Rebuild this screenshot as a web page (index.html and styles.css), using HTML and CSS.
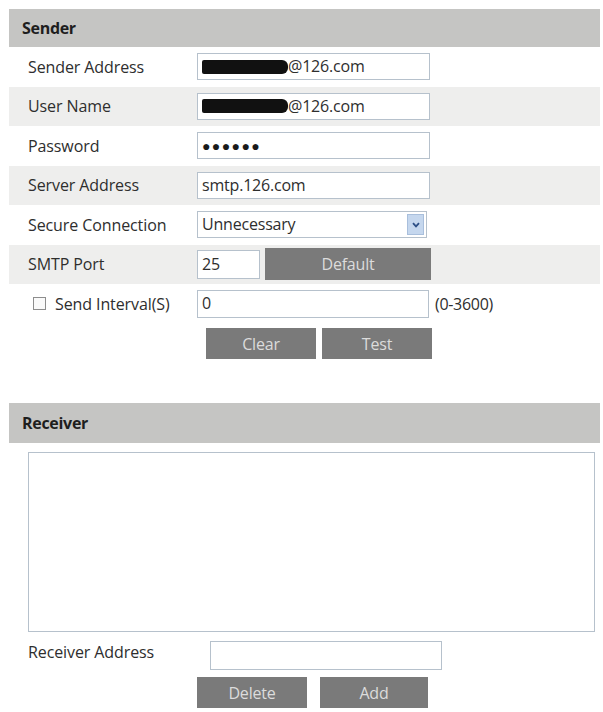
FILE: index.html
```html
<!DOCTYPE html>
<html lang="en">
<head>
    <meta charset="UTF-8">
    <meta name="viewport" content="width=device-width, initial-scale=1.0">
    <title>Email Settings</title>
    <link rel="stylesheet" href="styles.css">
</head>
<body>

<div class="page">

    <!-- Sender settings -->
    <div class="section-title">Sender</div>

    <div class="row">
        <label class="row-label">Sender Address</label>
        <div class="field"><span class="mask"></span>@126.com</div>
    </div>
    <div class="row alt">
        <label class="row-label">User Name</label>
        <div class="field"><span class="mask"></span>@126.com</div>
    </div>
    <div class="row">
        <label class="row-label">Password</label>
        <div class="field dots">&#9679;&#9679;&#9679;&#9679;&#9679;&#9679;</div>
    </div>
    <div class="row alt">
        <label class="row-label">Server Address</label>
        <div class="field">smtp.126.com</div>
    </div>
    <div class="row">
        <label class="row-label">Secure Connection</label>
        <div class="field select">
            <span>Unnecessary</span>
            <span class="select-arrow">
                <svg width="8" height="6" viewBox="0 0 8 6"><path d="M1 1.2 L4 4.4 L7 1.2" fill="none" stroke="#2d4f86" stroke-width="1.8"/></svg>
            </span>
        </div>
    </div>
    <div class="row alt">
        <label class="row-label">SMTP Port</label>
        <div class="field port">25</div>
        <button class="btn btn-default">Default</button>
    </div>
    <div class="row">
        <label class="row-label check-label"><span class="checkbox"></span>Send Interval(S)</label>
        <div class="field interval">0</div>
        <span class="hint">(0-3600)</span>
    </div>

    <div class="btn-row sender-btns">
        <button class="btn">Clear</button>
        <button class="btn">Test</button>
    </div>

    <!-- Receiver list -->
    <div class="section-title receiver-title">Receiver</div>

    <div class="receiver-list"></div>

    <div class="receiver-row">
        <label class="row-label receiver-label">Receiver Address</label>
        <div class="field receiver-field"></div>
    </div>

    <div class="btn-row receiver-btns">
        <button class="btn">Delete</button>
        <button class="btn btn-add">Add</button>
    </div>

</div>

</body>
</html>
```

FILE: styles.css
```css
body {
    font-family: "Open Sans", "Noto Sans", Arial, sans-serif;
    font-size: 16px;
    color: #2e2e2e;
    background-color: #fff;
    margin: 0;
    padding: 0;
}
.page {
    width: 591px;
    margin-left: 9px;
    padding-top: 9px;
}
.section-title {
    height: 38px;
    line-height: 38px;
    padding-left: 13px;
    background-color: #c5c5c3;
    font-weight: bold;
    color: #1e1e1e;
    letter-spacing: -0.3px;
}
.row {
    display: flex;
    align-items: center;
    height: 39.5px;
    padding-left: 19px;
}
.row.alt {
    background-color: #eeeeed;
}
.row-label {
    width: 169px;
    flex-shrink: 0;
    letter-spacing: -0.1px;
}
.field {
    box-sizing: border-box;
    width: 233px;
    height: 27px;
    line-height: 25px;
    padding-left: 4px;
    background-color: #fff;
    border: 1px solid #b6c1cc;
    display: flex;
    align-items: center;
    letter-spacing: -0.2px;
}
.mask {
    display: inline-block;
    width: 86px;
    height: 14px;
    background-color: #111;
    border-radius: 2px 6px 6px 2px;
}
.dots {
    font-size: 14px;
    letter-spacing: 1.4px;
    color: #1a1a1a;
}
.select {
    width: 230px;
    justify-content: space-between;
    padding-right: 2px;
}
.select-arrow {
    width: 17px;
    height: 21px;
    background-color: #c5d7ee;
    border: 1px solid #a9bfdc;
    box-sizing: border-box;
    display: flex;
    align-items: center;
    justify-content: center;
}
.port {
    width: 63px;
    height: 29px;
}
.btn {
    background-color: #7a7a7a;
    color: #dcdcdc;
    font-family: "Open Sans", "Noto Sans", Arial, sans-serif;
    font-size: 16px;
    border: none;
    height: 31px;
    width: 110px;
    padding: 0;
    letter-spacing: -0.2px;
}
.btn-default {
    width: 166px;
    height: 32px;
    margin-left: 5px;
}
.check-label {
    display: flex;
    align-items: center;
    padding-left: 5px;
    width: 164px;
}
.checkbox {
    width: 11px;
    height: 11px;
    border: 1px solid #8d8d8d;
    background-color: #fafafa;
    margin-right: 9px;
}
.interval {
    height: 28px;
    width: 232px;
}
.hint {
    margin-left: 6px;
    letter-spacing: -0.3px;
}
.btn-row {
    display: flex;
    gap: 6px;
}
.sender-btns {
    margin-top: 4.5px;
    padding-left: 197px;
}
.receiver-title {
    margin-top: 44px;
    height: 40px;
    line-height: 40px;
}
.receiver-list {
    margin-top: 9px;
    margin-left: 19px;
    width: 567px;
    height: 180px;
    box-sizing: border-box;
    border: 1px solid #b6c1cc;
}
.receiver-row {
    display: flex;
    align-items: center;
    height: 40px;
    padding-left: 19px;
}
.receiver-label {
    width: 182px;
}
.receiver-field {
    width: 232px;
    height: 29px;
    margin-top: 6px;
}
.receiver-btns {
    margin-top: 5px;
    padding-left: 188px;
    gap: 13px;
}
.btn-add {
    width: 108px;
}
```
